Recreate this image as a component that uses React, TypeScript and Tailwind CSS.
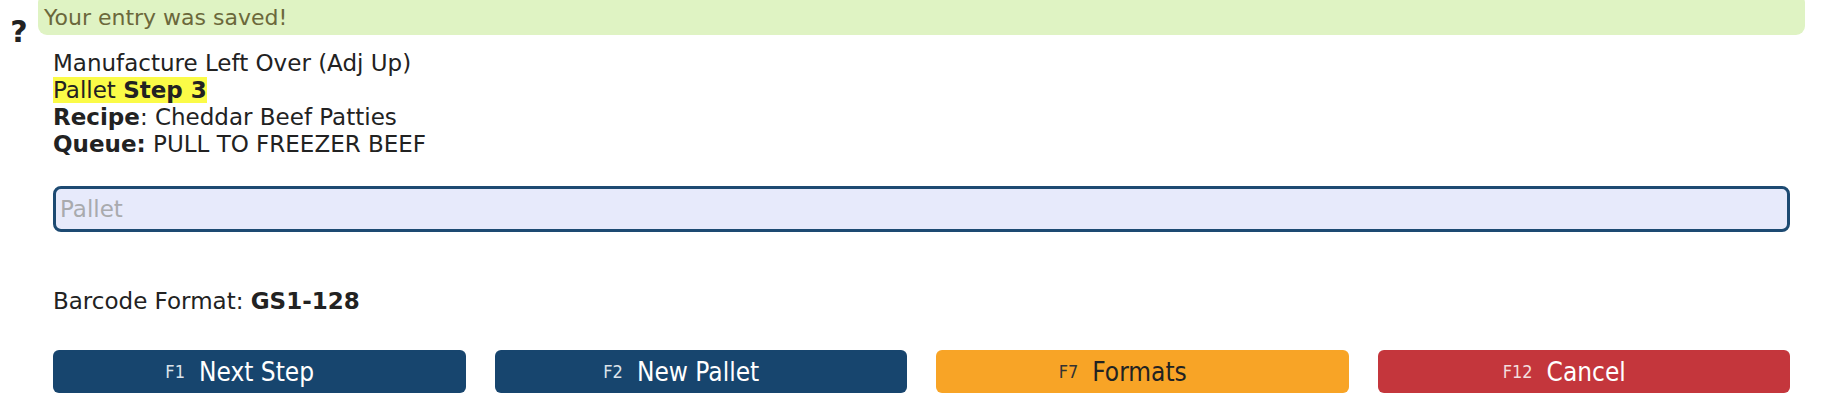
import React from "react";

const btnFont = { fontFamily: '"DejaVu Sans Condensed", Tahoma, "DejaVu Sans", sans-serif' };

function Btn({ k, label, cls, kcls }: { k: string; label: string; cls: string; kcls: string }) {
  return (
    <button
      className={`h-[43px] rounded-[6px] flex items-center justify-center gap-[14px] pr-[39px] ${cls}`}
      style={btnFont}
    >
      <span className={`text-[18px] leading-none ${kcls}`}>{k}</span>
      <span className="text-[26px] leading-none">{label}</span>
    </button>
  );
}

export default function App() {
  return (
    <div
      className="w-[1825px] h-[409px] bg-white text-[#222] relative overflow-hidden"
      style={{ fontFamily: 'Verdana, "DejaVu Sans", sans-serif' }}
    >
      <div className="flex">
        <div className="w-[38px] shrink-0 flex justify-center pt-[17px]">
          <span className="text-[30px] font-bold leading-none text-[#222]">?</span>
        </div>
        <div className="flex-1 mr-[20px] mt-[-6px] h-[41px] bg-[#dff3c3] rounded-[9px] flex items-end pb-[6px] pl-[6px]">
          <span className="text-[22px] leading-none text-[#6b683b]">Your entry was saved!</span>
        </div>
      </div>
      <div className="pl-[53px] pr-[35px] pt-[3px]">
        <div className="text-[23px] leading-[27px]">
          <div>Manufacture Left Over (Adj Up)</div>
          <div>
            <span className="bg-[#fbfb47]">
              Pallet <b>Step 3</b>
            </span>
          </div>
          <div>
            <b>Recipe</b>: Cheddar Beef Patties
          </div>
          <div>
            <b>Queue:</b> PULL TO FREEZER BEEF
          </div>
        </div>
        <input
          className="mt-[28px] w-full h-[46px] rounded-[8px] border-[3px] border-[#1d4a72] bg-[#e7eafb] px-[4px] text-[23px] outline-none placeholder:text-[#a9aaae]"
          placeholder="Pallet"
        />
        <div className="mt-[56px] text-[23px] leading-[27px]">
          Barcode Format: <b>GS1-128</b>
        </div>
        <div className="mt-[35px] grid grid-cols-4 gap-[29px]">
          <Btn k="F1" label="Next Step" cls="bg-[#17456e] text-white" kcls="text-[#dde3ea]" />
          <Btn k="F2" label="New Pallet" cls="bg-[#17456e] text-white" kcls="text-[#dde3ea]" />
          <Btn k="F7" label="Formats" cls="bg-[#f8a426] text-[#222]" kcls="text-[#333]" />
          <Btn k="F12" label="Cancel" cls="bg-[#c4363c] text-white" kcls="text-[#f3dede]" />
        </div>
      </div>
    </div>
  );
}
